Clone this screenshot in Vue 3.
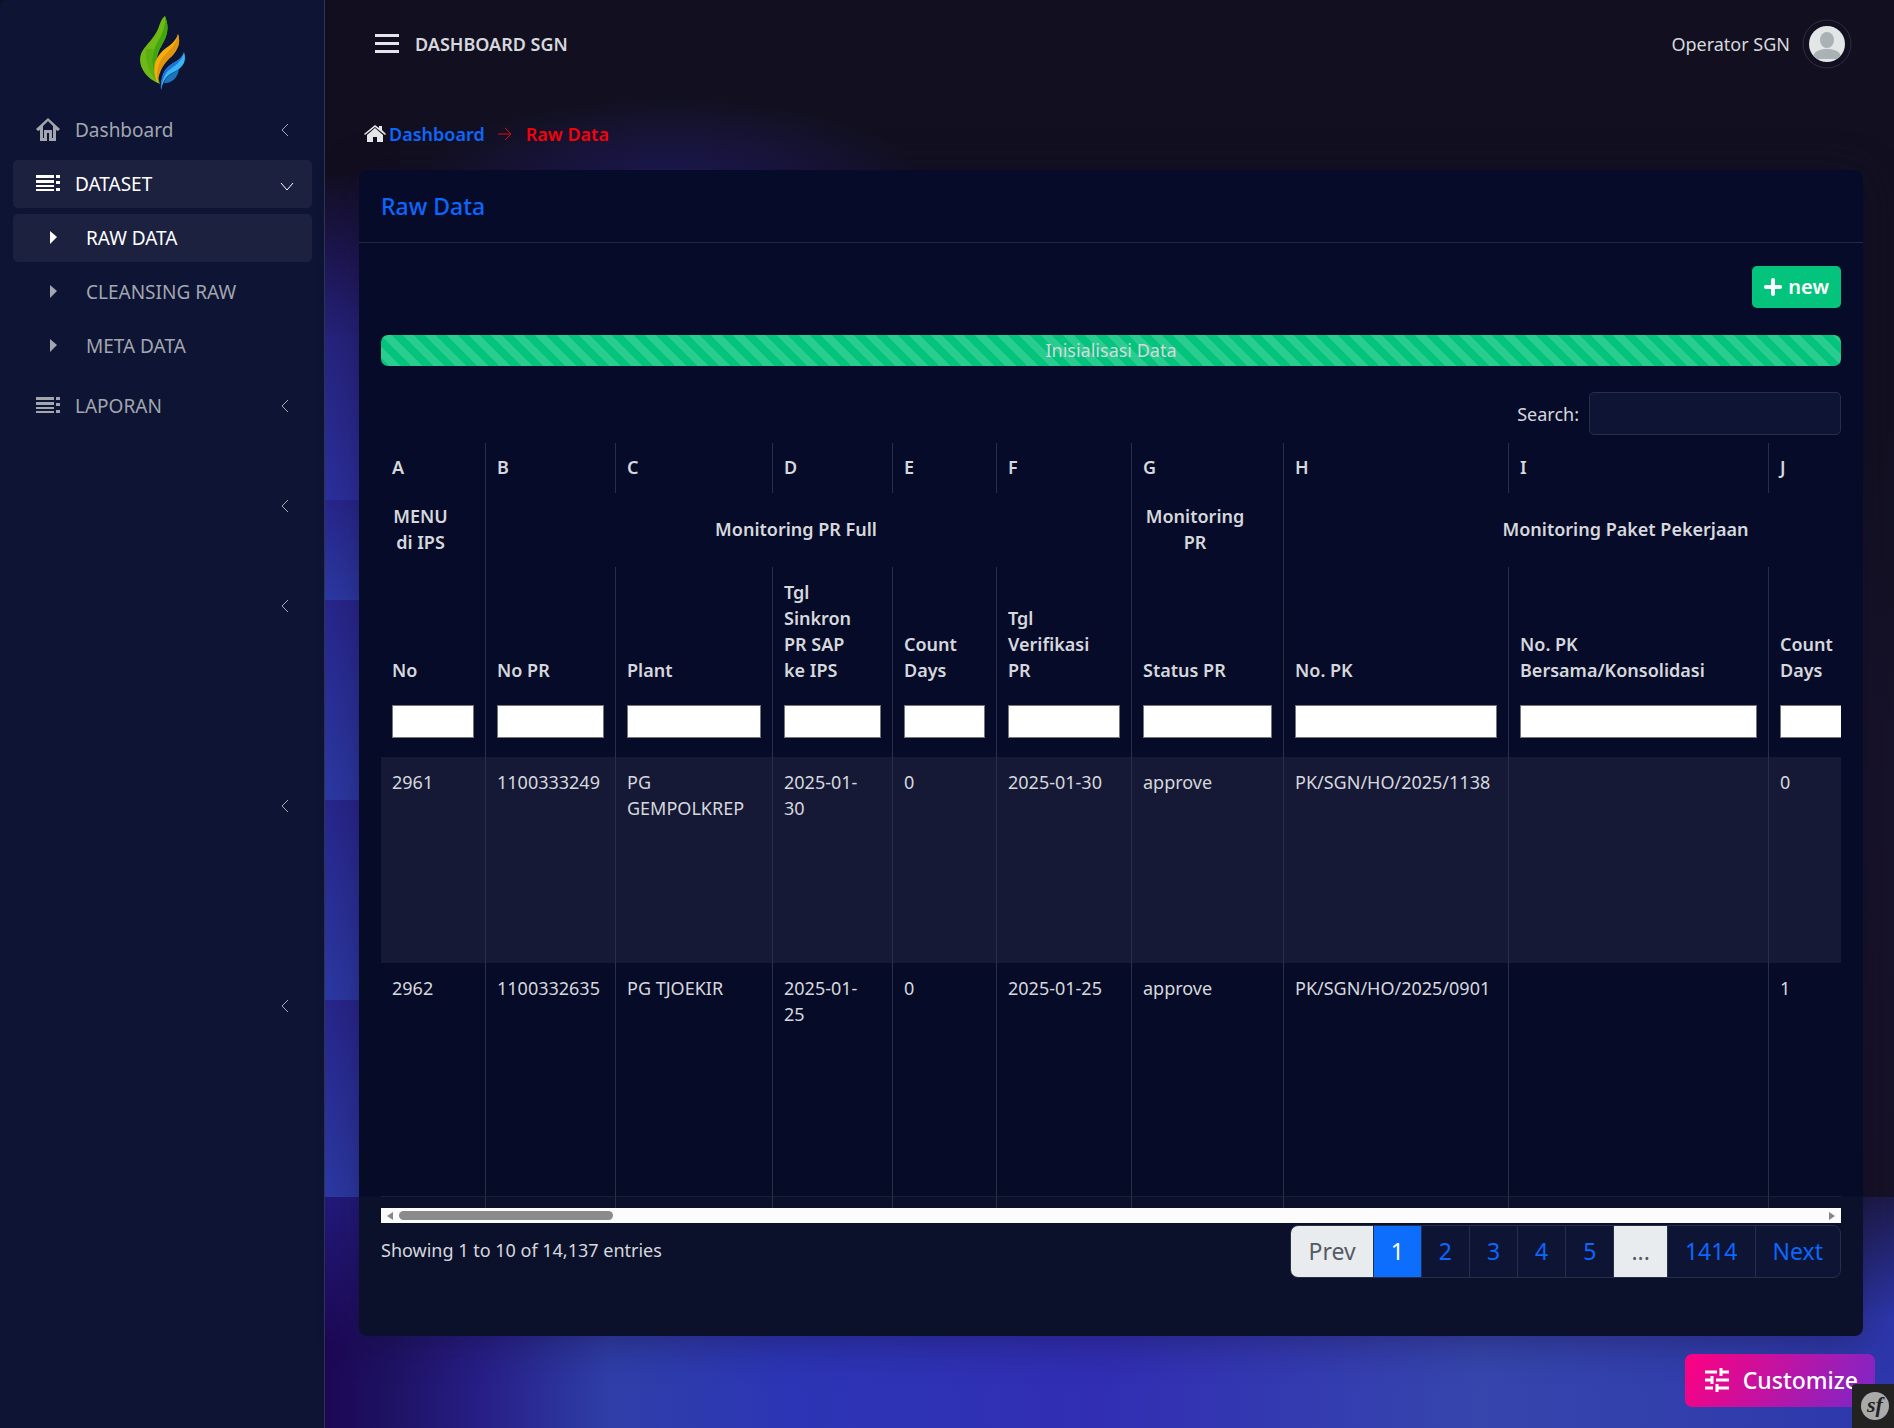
<script setup>
import { ref } from 'vue'

const search = ref('')

const columns = [
  { letter: 'A', label: 'No', width: 105 },
  { letter: 'B', label: 'No PR', width: 130 },
  { letter: 'C', label: 'Plant', width: 157 },
  { letter: 'D', label: 'Tgl Sinkron PR SAP ke IPS', width: 120 },
  { letter: 'E', label: 'Count Days', width: 104 },
  { letter: 'F', label: 'Tgl Verifikasi PR', width: 135 },
  { letter: 'G', label: 'Status PR', width: 152 },
  { letter: 'H', label: 'No. PK', width: 225 },
  { letter: 'I', label: 'No. PK Bersama/Konsolidasi', width: 260 },
  { letter: 'J', label: 'Count Days', width: 104 },
  { letter: '', label: '', width: 120 }
]

const groups = [
  { label: 'MENU di IPS', span: 1 },
  { label: 'Monitoring PR Full', span: 5 },
  { label: 'Monitoring PR', span: 1 },
  { label: 'Monitoring Paket Pekerjaan', span: 4 }
]

const rows = [
  ['2961', '1100333249', 'PG GEMPOLKREP', '2025-01-30', '0', '2025-01-30', 'approve', 'PK/SGN/HO/2025/1138', '', '0', ''],
  ['2962', '1100332635', 'PG TJOEKIR', '2025-01-25', '0', '2025-01-25', 'approve', 'PK/SGN/HO/2025/0901', '', '1', '']
]

const children = ['RAW DATA', 'CLEANSING RAW', 'META DATA']

const pages = [
  { label: 'Prev', state: 'disabled' },
  { label: '1', state: 'active' },
  { label: '2' },
  { label: '3' },
  { label: '4' },
  { label: '5' },
  { label: '...', state: 'disabled' },
  { label: '1414' },
  { label: 'Next' }
]
</script>

<template>
  <div class="page">
    <aside class="sidebar">
      <a class="brand" href="#" aria-label="SGN">
        <svg width="48" height="76" viewBox="0 0 48 76">
          <path d="M21 68C5 62-4 46 4 34C8 28 15 22 19 13C21 8 22 3 26 0C29 8 30 15 25 25C19 36 13 46 21 68Z" fill="#6fb916" />
          <path d="M26 0C29 8 30 15 25 25C19 36 12 46 20 66C12 52 11 41 17 29C23 19 27 10 26 0Z" fill="#3fa70d" />
          <path d="M7 33C6 46 10 57 18 65C14 55 12 44 14 33Z" fill="#4da512" opacity=".55" />
          <path d="M18 66C12 50 17 40 27 32C33 28 37 24 39 18C42 27 39 33 33 40C25 47 18 53 19 67Z" fill="#f8ad0b" />
          <path d="M39 18C38 28 31 34 24 41C18 49 17 58 19 66C20 55 25 47 33 40C39 33 42 27 39 18Z" fill="#dd9410" />
          <path d="M22 74C22 55 29 50 36 46C41 43 44 40 45 36C48 45 44 51 37 55C30 58 25 61 22 74Z" fill="#38b6f2" />
          <path d="M22 74C21 57 27 51 36 46C41 43 44 40 45 36C43 46 35 50 29 55C25 59 23 65 22 74Z" fill="#1f72d8" />
          <path d="M25 67C27 59 33 58 40 53C39 62 32 68 25 67Z" fill="#1c74bd" />
        </svg>
      </a>
      <nav>
        <ul class="menu">
          <li>
            <a class="item" href="#">
              <svg class="icon" viewBox="0 0 24 24"><path d="M12 0L24 11L22 13L20 12V23H13V15H11V23H4V12L2 13L0 11ZM12 3L7 8V20H8V12H16V20H17V8Z" fill="currentColor" fill-rule="evenodd" /></svg>
              <span>Dashboard</span>
              <svg class="chev" viewBox="0 0 16 16"><path d="M10 2L4 8L10 14" /></svg>
            </a>
          </li>
          <li>
            <a class="item active" href="#">
              <svg class="icon" viewBox="0 0 24 24"><path d="M0 3H18V6H0ZM0 8H18V11H0ZM0 13H18V15H0ZM0 17H18V19H0ZM20 3H24V6H20ZM20 9H24V12H20ZM20 16H24V19H20Z" fill="currentColor" /></svg>
              <span>DATASET</span>
              <svg class="chev" viewBox="0 0 16 16"><path d="M3 7L9 14L15 7" /></svg>
            </a>
            <ul class="submenu">
              <li v-for="(name, i) in children" :key="name">
                <a class="item sub" :class="{ active: i === 0 }" href="#">
                  <svg class="caret" viewBox="0 0 8 14"><path d="M1 0L8 6L1 13Z" fill="currentColor" /></svg>
                  <span>{{ name }}</span>
                </a>
              </li>
            </ul>
          </li>
          <li class="spaced">
            <a class="item" href="#">
              <svg class="icon" viewBox="0 0 24 24"><path d="M0 3H18V6H0ZM0 8H18V11H0ZM0 13H18V15H0ZM0 17H18V19H0ZM20 3H24V6H20ZM20 9H24V12H20ZM20 16H24V19H20Z" fill="currentColor" /></svg>
              <span>LAPORAN</span>
              <svg class="chev" viewBox="0 0 16 16"><path d="M10 2L4 8L10 14" /></svg>
            </a>
          </li>
          <li v-for="n in 4" :key="n" :class="n > 2 ? 'far' : 'near'">
            <a class="item" href="#" aria-label="Menu">
              <svg class="chev" viewBox="0 0 16 16"><path d="M10 2L4 8L10 14" /></svg>
            </a>
          </li>
        </ul>
      </nav>
    </aside>

    <div class="main">
      <header class="topbar">
        <button class="toggle" type="button" aria-label="Toggle menu">
          <svg width="24" height="20" viewBox="0 0 24 20"><path d="M0 0H24V3H0ZM0 8H24V11H0ZM0 16H24V19H0Z" fill="currentColor" /></svg>
        </button>
        <strong class="title">DASHBOARD SGN</strong>
        <a class="user" href="#">
          <span>Operator SGN</span>
          <svg class="avatar" viewBox="0 0 50 50">
            <circle cx="25" cy="25" r="24" fill="none" stroke="#302d3d" />
            <clipPath id="face"><circle cx="25" cy="25" r="18" /></clipPath>
            <g clip-path="url(#face)">
              <rect width="50" height="50" fill="#e3e6e7" />
              <ellipse cx="25" cy="21" rx="7" ry="8" fill="#aab2b5" />
              <path d="M11 39C11 32 18 30 25 30C32 30 39 32 39 39V40H11Z" fill="#aab2b5" />
            </g>
          </svg>
        </a>
      </header>

      <nav class="crumbs">
        <svg width="22" height="18" viewBox="0 0 22 18"><path d="M11 3L19 10V17H13V12H9V17H3V10ZM0 9L11 0L15 3V1H18V5L22 9L21 10L11 2L1 10Z" fill="#e4e5e8" /></svg>
        <a href="#">Dashboard</a>
        <svg class="arrow" width="14" height="14" viewBox="0 0 14 14"><path d="M0 7H13M7 1L13 7L7 13" fill="none" stroke="#dc0c18" /></svg>
        <span>Raw Data</span>
      </nav>

      <section class="card">
        <h1>Raw Data</h1>
        <div class="body">
          <div class="actions">
            <button class="new" type="button">
              <svg width="18" height="18" viewBox="0 0 18 18"><path d="M9 2V16M2 9H16" stroke="#fff" stroke-width="4" stroke-linecap="round" /></svg>
              new
            </button>
          </div>
          <div class="progress" role="progressbar">Inisialisasi Data</div>
          <div class="filter">
            <label for="search">Search:</label>
            <input id="search" v-model="search" type="search" />
          </div>

          <div class="scroller">
            <table>
              <colgroup>
                <col v-for="c in columns" :key="c.letter" :style="{ width: c.width + 'px' }" />
              </colgroup>
              <thead>
                <tr class="letters">
                  <th v-for="c in columns" :key="c.letter">{{ c.letter }}</th>
                </tr>
                <tr class="groups">
                  <th v-for="g in groups" :key="g.label" :colspan="g.span">{{ g.label }}</th>
                </tr>
                <tr class="labels">
                  <th v-for="c in columns" :key="c.letter">
                    <label :for="'f' + c.letter">{{ c.label }}</label>
                    <input :id="'f' + c.letter" type="text" />
                  </th>
                </tr>
              </thead>
              <tbody>
                <tr v-for="r in rows" :key="r[0]">
                  <td v-for="(cell, i) in r" :key="i">{{ cell }}</td>
                </tr>
                <tr class="next">
                  <td v-for="c in columns" :key="c.letter"></td>
                </tr>
              </tbody>
            </table>
          </div>
          <div class="scrollbar">
            <svg width="6" height="8" viewBox="0 0 6 8"><path d="M6 0V8L0 4Z" fill="#868686" /></svg>
            <div class="track"><div class="thumb"></div></div>
            <svg width="6" height="8" viewBox="0 0 6 8"><path d="M0 0V8L6 4Z" fill="#868686" /></svg>
          </div>

          <div class="foot">
            <p>Showing 1 to 10 of 14,137 entries</p>
            <ul class="pages">
              <li v-for="p in pages" :key="p.label">
                <a href="#" :class="p.state">{{ p.label }}</a>
              </li>
            </ul>
          </div>
        </div>
      </section>
    </div>

    <button class="customize" type="button">
      <svg width="26" height="26" viewBox="0 0 26 26"><path d="M1 5H13M17 5H25M1 13H7M12 13H25M1 21H9M14 21H25M17 1V9M8 9V17M13 17V25" fill="none" stroke="#fff" stroke-width="3" /></svg>
      Customize
    </button>
    <a class="toolbar" href="#" aria-label="Symfony">
      <span>sf</span>
    </a>
  </div>
</template>

<style>
body {
  margin: 0;
  background: #130f20;
}
</style>

<style scoped>
* {
  box-sizing: border-box;
}

.page {
  display: flex;
  min-height: 100vh;
  font: 18px/26px "Noto Sans", "Open Sans", sans-serif;
  color: #d6d8dd;
  background:
    linear-gradient(#1d1b4a, transparent) 100% 1197px / 60px 120px no-repeat,
    radial-gradient(ellipse 260px 90px at 670px 190px, #1f1b5c, transparent) no-repeat,
    linear-gradient(#221a7c, transparent) 325px 1197px / 34px 150px no-repeat,
    linear-gradient(90deg, #1d0754 325px, #1e1263 390px, #271e86 480px, #2f3fa8 610px, #2c35b5 790px, #312eb3 1100px, #3646ad 1480px, #2d37ab 1890px) 0 1197px / 100% 400px no-repeat,
    linear-gradient(#120e1f 170px, #1d1754 260px, #26247f 340px, #2c309e 500px) 0 0 / 400px 500px no-repeat,
    linear-gradient(#28268c, #2c3aa5) 0 500px / 400px 100px no-repeat,
    linear-gradient(#28268c, #2c3aa5) 0 600px / 400px 200px no-repeat,
    linear-gradient(#28268c, #2c3aa5) 0 800px / 400px 200px no-repeat,
    linear-gradient(#28268c, #2c3aa5) 0 1000px / 400px 197px no-repeat,
    linear-gradient(#121020 400px, #17132b 800px, #151126 1197px);
}

a {
  color: inherit;
  text-decoration: none;
}

ul {
  margin: 0;
  padding: 0;
  list-style: none;
}

button {
  border: 0;
  font: inherit;
  cursor: pointer;
}

.sidebar {
  flex: 0 0 325px;
  padding: 0 12px 0 13px;
  background: #0d1434;
  border-right: 1px solid #2f3550;
  border-top-left-radius: 6px;
}

.brand {
  display: flex;
  justify-content: center;
  padding: 16px 0 14px;
}

.menu,
.submenu {
  display: flex;
  flex-direction: column;
  gap: 6px;
}

.submenu {
  margin-top: 6px;
}

.item {
  display: flex;
  align-items: center;
  height: 48px;
  padding: 0 18px 0 23px;
  border-radius: 5px;
  font-size: 19px;
  color: #a3a6ae;
}

.item.active {
  color: #fff;
  background: #1d2140;
}

.icon {
  width: 24px;
  height: 24px;
  margin-right: 15px;
}

.item.sub {
  padding-left: 36px;
}

.caret {
  width: 8px;
  height: 14px;
  margin-right: 29px;
}

.chev {
  width: 16px;
  height: 16px;
  margin-left: auto;
  fill: none;
  stroke: currentColor;
}

.spaced {
  margin-top: 6px;
}

.near {
  margin-top: 46px;
}

.far {
  margin-top: 146px;
}

.main {
  flex: 1;
  min-width: 0;
  padding: 0 31px 92px 34px;
}

.topbar {
  display: flex;
  align-items: center;
  height: 88px;
  padding: 0 11px 0 16px;
}

.toggle {
  display: flex;
  padding: 0;
  margin-right: 16px;
  background: none;
  color: #e4e5e8;
}

.title {
  font-weight: 600;
}

.user {
  display: flex;
  align-items: center;
  gap: 12px;
  margin-left: auto;
}

.avatar {
  width: 50px;
  height: 50px;
}

.crumbs {
  display: flex;
  align-items: center;
  height: 82px;
  padding: 10px 0 0 5px;
  font-weight: 600;
  color: #f80008;
}

.crumbs a {
  margin: 0 13px 0 3px;
  color: #0d66fd;
}

.arrow {
  margin-right: 14px;
}

.card {
  border-radius: 8px;
  background: linear-gradient(#050b28, #060b28 1026px, #0c112b 1027px, #0c112b);
  box-shadow: 0 4px 40px rgba(20, 10, 40, .4);
}

h1 {
  margin: 0;
  padding: 24px 22px;
  border-bottom: 1px solid #232841;
  font-size: 23px;
  font-weight: 500;
  line-height: 24px;
  color: #0d66fd;
}

.body {
  padding: 23px 22px 58px;
}

.actions {
  display: flex;
  justify-content: flex-end;
}

.new {
  display: flex;
  align-items: center;
  gap: 6px;
  height: 42px;
  padding: 0 12px;
  border-radius: 5px;
  background: #04c47d;
  color: #fff;
  font-size: 20px;
  font-weight: 600;
}

.progress {
  height: 31px;
  margin: 27px 0 26px;
  border-radius: 7px;
  background: linear-gradient(45deg, rgba(255, 255, 255, .15) 25%, transparent 25%, transparent 50%, rgba(255, 255, 255, .15) 50%, rgba(255, 255, 255, .15) 75%, transparent 75%) 0 0 / 22px 22px #04c47d;
  line-height: 31px;
  text-align: center;
}

.filter {
  display: flex;
  align-items: center;
  justify-content: flex-end;
  gap: 10px;
}

.filter input {
  width: 252px;
  height: 43px;
  border: 1px solid #292e48;
  border-radius: 5px;
  background: #0d1434;
  color: inherit;
}

.scroller {
  margin-top: 8px;
  overflow: hidden;
}

table {
  width: 1612px;
  table-layout: fixed;
  border-collapse: separate;
  border-spacing: 0;
}

th,
td {
  padding: 12px 15px 12px 11px;
  border-right: 1px solid #2a2f47;
  text-align: left;
  vertical-align: top;
}

th {
  font-weight: 600;
}

.letters th {
  height: 50px;
  padding-top: 11px;
}

.groups th {
  height: 74px;
  padding: 10px 36px 12px 11px;
  text-align: center;
  vertical-align: middle;
}

.labels th {
  height: 190px;
  padding: 12px 11px 19px;
  vertical-align: bottom;
}

.labels label,
.labels input {
  display: block;
}

.labels label {
  padding-right: 25px;
}

.labels input {
  width: 100%;
  height: 33px;
  margin-top: 22px;
  border: 1px solid #767676;
  background: #fff;
}

td {
  height: 206px;
}

tbody tr:nth-child(1) td {
  background: #151935;
}

tbody tr:nth-child(2) td {
  height: 234px;
  border-bottom: 1px solid #191e37;
}

.next td {
  height: 11px;
  padding: 0;
}

.scrollbar {
  display: flex;
  align-items: center;
  gap: 6px;
  height: 15px;
  padding: 0 6px;
  background: #fcfcfc;
}

.track {
  flex: 1;
}

.thumb {
  width: 15%;
  height: 9px;
  border-radius: 5px;
  background: #8b8b8b;
}

.foot {
  display: flex;
  align-items: flex-start;
  justify-content: space-between;
  margin-top: 2px;
}

.foot p {
  margin: 12px 0;
}

.pages {
  display: flex;
  overflow: hidden;
  border: 1px solid #292e48;
  border-radius: 8px;
  background: #0d1434;
  font-size: 23px;
}

.pages a {
  display: block;
  height: 51px;
  padding: 0 17px;
  border-right: 1px solid #292e48;
  line-height: 51px;
  color: #0d66fd;
}

.pages li:last-child a {
  border-right: 0;
}

.pages a.disabled {
  background: #e9ecef;
  color: #555b62;
}

.pages a.active {
  background: #0d6efd;
  color: #fff;
}

.customize {
  position: fixed;
  right: 19px;
  bottom: 21px;
  display: flex;
  align-items: center;
  gap: 13px;
  height: 53px;
  padding: 0 17px 2px 19px;
  border-radius: 7px;
  background: linear-gradient(120deg, #ff0080, #7928ca);
  color: #fff;
  font-size: 23px;
  font-weight: 500;
}

.toolbar {
  position: fixed;
  right: 0;
  bottom: 0;
  display: flex;
  align-items: center;
  justify-content: center;
  width: 42px;
  height: 44px;
  padding-left: 4px;
  border-top-left-radius: 4px;
  background: #222;
}

.toolbar span {
  width: 28px;
  height: 28px;
  border-radius: 50%;
  background: #aaa;
  color: #222;
  font: italic bold 22px/26px "Liberation Serif", serif;
  text-align: center;
}
</style>
